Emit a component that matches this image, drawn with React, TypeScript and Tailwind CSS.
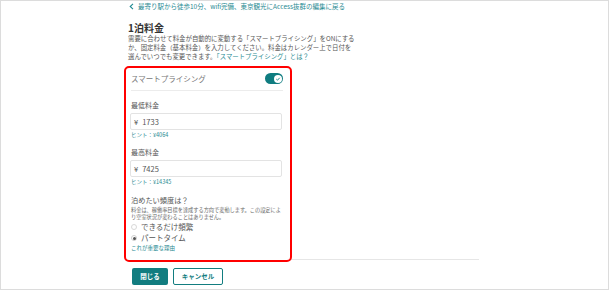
import React from "react";

const teal = "text-[#1f8a92]";

function Radio({ checked, label }: { checked?: boolean; label: string }) {
  return (
    <div className="flex items-center h-[10px]">
      <span
        className={
          "w-[6px] h-[6px] rounded-full border flex items-center justify-center " +
          (checked ? "border-[#cfcfcf]" : "border-[#d8d8d8]")
        }
      >
        {checked && <span className="w-[3px] h-[3px] rounded-full bg-[#555]" />}
      </span>
      <span className="ml-[4px] text-[7.5px] leading-[10px] text-[#555]">{label}</span>
    </div>
  );
}

export default function App() {
  return (
    <div className="w-[609px] h-[290px] border border-[#dcdcdc] bg-white overflow-hidden font-['Noto_Sans_CJK_JP','Noto_Sans',sans-serif]">
      <div className="ml-[127px] w-[351px]">
        {/* back link */}
        <div className={"flex items-center h-[10px] " + teal}>
          <svg width="5" height="7" viewBox="0 0 5 7" className="ml-[1px]">
            <path d="M4 0.8 L1.2 3.5 L4 6.2" fill="none" stroke="#1f8a92" strokeWidth="1.1" />
          </svg>
          <span className="ml-[4px] text-[6.5px] leading-[10px] whitespace-nowrap">
            最寄り駅から徒歩10分、wifi完備、東京観光にAccess抜群の編集に戻る
          </span>
        </div>

        {/* title */}
        <div className="mt-[11px] h-[11px] leading-[11px] text-[10px] font-bold text-[#333]">1泊料金</div>

        {/* description */}
        <p className="mt-[1px] text-[6.4px] leading-[9px] text-[#555] whitespace-nowrap">
          需要に合わせて料金が自動的に変動する「スマートプライシング」をONにする
          <br />
          か、固定料金（基本料金）を入力してください。料金はカレンダー上で日付を
          <br />
          選んでいつでも変更できます。<span className={teal}>「スマートプライシング」とは？</span>
        </p>

        {/* red annotated form box */}
        <div className="relative z-10 mt-[5px] -ml-[4px] w-[168px] border-2 border-[#ff0000] rounded-[5px] bg-white pl-[5px] pr-[7px] pb-[8px]">
          <div className="mt-[5px] h-[11px] flex items-center justify-between">
            <span className="text-[7.5px] leading-[11px] text-[#777]">スマートプライシング</span>
            <span className="w-[18px] h-[11px] rounded-full bg-[#0f7c80] flex items-center justify-end pr-[1.5px]">
              <span className="w-[8px] h-[8px] rounded-full bg-white flex items-center justify-center">
                <svg width="6" height="6" viewBox="0 0 6 6">
                  <path d="M1.3 3.1 L2.5 4.2 L4.7 1.8" fill="none" stroke="#0f7c80" strokeWidth="0.9" />
                </svg>
              </span>
            </span>
          </div>
          <div className="mt-[6px] h-px bg-[#ececec]" />

          <div className="mt-[9px] h-[10px] leading-[10px] text-[7px] text-[#555]">最低料金</div>
          <div className="mt-[3px] -ml-px w-[152px] h-[17px] border border-[#e3e3e3] rounded-[2px] flex items-center pl-[3px] text-[7.5px] text-[#555]">
            <span>¥</span>
            <span className="ml-[4px]">1733</span>
          </div>
          <div className={"mt-[1px] h-[8px] leading-[8px] text-[5.5px] " + teal}>ヒント：¥4064</div>

          <div className="mt-[8px] h-[10px] leading-[10px] text-[7px] text-[#555]">最高料金</div>
          <div className="mt-[3px] -ml-px w-[152px] h-[17px] border border-[#e3e3e3] rounded-[2px] flex items-center pl-[3px] text-[7.5px] text-[#555]">
            <span>¥</span>
            <span className="ml-[4px]">7425</span>
          </div>
          <div className={"mt-[1px] h-[8px] leading-[8px] text-[5.5px] " + teal}>ヒント：¥14345</div>

          <div className="mt-[9px] h-[10px] leading-[10px] text-[7.2px] text-[#555]">泊めたい頻度は？</div>
          <p className="mt-[1px] text-[5.2px] leading-[7px] text-[#666] whitespace-nowrap">
            料金は、稼働率目標を達成する方向で変動します。この設定によ
            <br />
            り空室状況が変わることはありません。
          </p>
          <div className="mt-[2px]">
            <Radio label="できるだけ頻繁" />
          </div>
          <div className="mt-[1px]">
            <Radio checked label="パートタイム" />
          </div>
          <div className={"mt-[2px] h-[7px] leading-[7px] text-[5.5px] " + teal}>これが重要な理由</div>
        </div>

        {/* bottom divider */}
        <div className="-mt-[3px] ml-[1px] w-[350px] h-px bg-[#e6e6e6]" />

        {/* buttons */}
        <div className="mt-[8px] ml-[4px] flex gap-[5px]">
          <button className="w-[36px] h-[17px] rounded-[2px] bg-[#127d80] text-white text-[6.5px] font-bold leading-[17px]">
            閉じる
          </button>
          <button className="w-[50px] h-[17px] rounded-[2px] border border-[#127d80] bg-white text-[#127d80] text-[6.5px] font-bold leading-[15px]">
            キャンセル
          </button>
        </div>
      </div>
    </div>
  );
}
